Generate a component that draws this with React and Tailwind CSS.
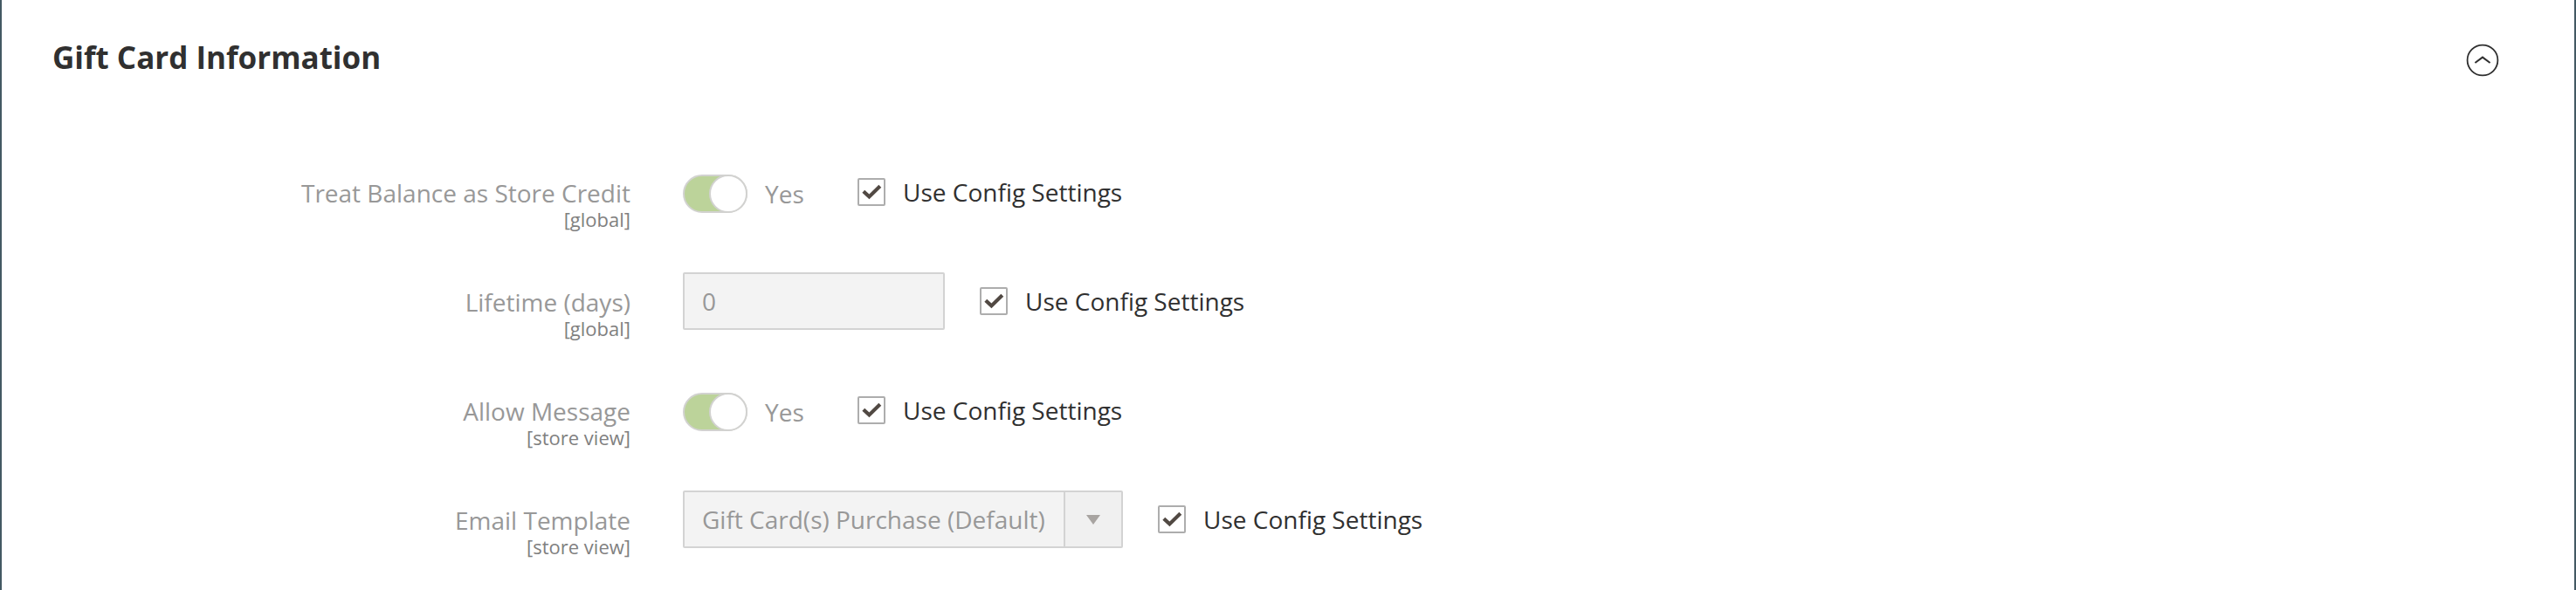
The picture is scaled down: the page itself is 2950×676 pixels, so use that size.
import { useState } from "react";

function Row({ id, label, scope, children }) {
  return (
    <div className="grid grid-cols-[664px_1fr] gap-x-[60px]">
      <div className="pt-[19px] text-right">
        <label htmlFor={id} className="block text-[28px] leading-[30px] text-[#989898]">
          {label}
        </label>
        <span className="block text-[22px] leading-[30px] text-[#808080]">{scope}</span>
      </div>
      <div className="flex items-start">{children}</div>
    </div>
  );
}

function UseConfig({ id }) {
  const [on, setOn] = useState(true);
  return (
    <div className="flex h-[66px] items-center gap-5">
      <span className="relative flex size-8">
        <input
          id={id}
          type="checkbox"
          checked={on}
          onChange={(e) => setOn(e.target.checked)}
          className="size-8 appearance-none rounded-[2px] border-2 border-[#adadad] bg-white"
        />
        {on && (
          <svg viewBox="0 0 32 32" className="pointer-events-none absolute inset-0 size-8" aria-hidden="true">
            <path d="M6.8 15.2 L13.4 21.4 L25.8 9.2" fill="none" stroke="#514943" strokeWidth="4.2" />
          </svg>
        )}
      </span>
      <label htmlFor={id} className="text-[28px] leading-[38px] text-[#303030]">
        Use Config Settings
      </label>
    </div>
  );
}

function Toggle({ id }) {
  return (
    <div className="flex h-[70px] w-[200px] items-center gap-5">
      <span className="relative flex">
        <input
          id={id}
          type="checkbox"
          role="switch"
          checked
          disabled
          readOnly
          className="h-11 w-[74px] appearance-none rounded-full border-2 border-[#d2d2d0] bg-[#bcd39a]"
        />
        <span className="pointer-events-none absolute top-0 right-0 size-11 rounded-full border-2 border-[#d2d2d0] bg-white" />
      </span>
      <span className="text-[28px] leading-[38px] text-[#989898]">Yes</span>
    </div>
  );
}

export default function App() {
  return (
    <main className="min-h-screen border-x-2 border-[#435963] bg-white font-['Open_Sans',sans-serif] text-[#303030]">
      <header className="flex items-start justify-between pt-[42px] pr-[86px] pl-[58px]">
        <h2 className="text-[35px] leading-[48px] font-bold">Gift Card Information</h2>
        <button type="button" aria-label="Collapse section" className="mt-2 size-[38px]">
          <svg viewBox="0 0 38 38" className="size-[38px]" fill="none" stroke="#303030">
            <circle cx="19" cy="19" r="17.4" strokeWidth="1.8" />
            <path d="M10.4 22 L19 15.6 L27.6 22" strokeWidth="2" />
          </svg>
        </button>
      </header>

      <form className="flex flex-col gap-[46px] pt-[97px] pl-[56px]">
        <Row id="store-credit" label="Treat Balance as Store Credit" scope="[global]">
          <Toggle id="store-credit" />
          <UseConfig id="store-credit-config" />
        </Row>
        <Row id="lifetime" label="Lifetime (days)" scope="[global]">
          <input
            id="lifetime"
            type="text"
            defaultValue="0"
            disabled
            className="mr-10 h-[66px] w-[300px] rounded-[2px] border-2 border-[#d3d3d3] bg-[#f3f3f3] px-5 text-[28px] text-[#989898]"
          />
          <UseConfig id="lifetime-config" />
        </Row>
        <Row id="allow-message" label="Allow Message" scope="[store view]">
          <Toggle id="allow-message" />
          <UseConfig id="allow-message-config" />
        </Row>
        <Row id="email-template" label="Email Template" scope="[store view]">
          <div className="relative mr-10 flex">
            <select
              id="email-template"
              disabled
              className="h-[66px] w-[504px] appearance-none rounded-[2px] border-2 border-[#d3d3d3] bg-[#f3f3f3] pr-20 pl-5 text-[28px] text-[#989898] opacity-100"
            >
              <option>Gift Card(s) Purchase (Default)</option>
            </select>
            <span className="pointer-events-none absolute inset-y-[2px] right-[2px] flex w-[66px] items-center justify-center border-l-2 border-[#d3d3d3] bg-[#f0f0f0]">
              <svg viewBox="0 0 16 11" className="h-[11px] w-4" aria-hidden="true">
                <path d="M0 0H16L8 11Z" fill="#a8a4a1" />
              </svg>
            </span>
          </div>
          <UseConfig id="email-template-config" />
        </Row>
      </form>
    </main>
  );
}
